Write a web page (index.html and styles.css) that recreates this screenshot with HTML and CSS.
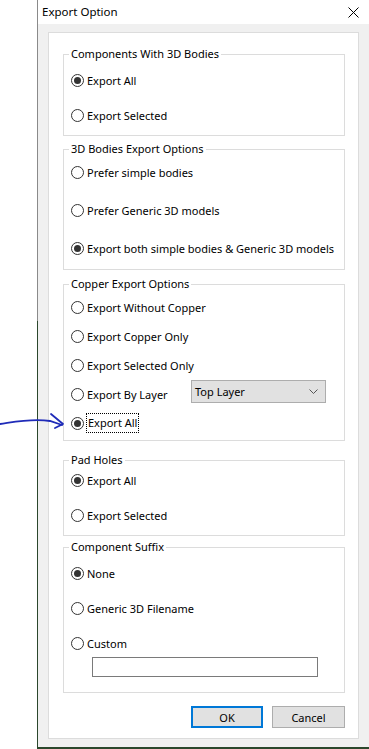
FILE: index.html
```html
<!DOCTYPE html>
<html lang="en">
  <head>
    <meta charset="UTF-8" />
    <meta name="viewport" content="width=device-width, initial-scale=1.0" />
    <title>Export Option</title>
    <link rel="stylesheet" href="styles.css">
  </head>

  <body>
    <div class="dialog">
      <div class="titlebar">
        <span class="title">Export Option</span>
        <svg class="close" width="11" height="11" viewBox="0 0 11 11">
          <path d="M0.5 0.5 L10.5 10.5 M10.5 0.5 L0.5 10.5" stroke="#000" stroke-width="1" fill="none" />
        </svg>
      </div>

      <div class="client">
        <div class="panel">
          <fieldset class="group g1">
            <legend>Components With 3D Bodies</legend>
            <div class="opt"><span class="radio on"></span><span>Export All</span></div>
            <div class="opt"><span class="radio"></span><span>Export Selected</span></div>
          </fieldset>

          <fieldset class="group g2">
            <legend>3D Bodies Export Options</legend>
            <div class="opt"><span class="radio"></span><span>Prefer simple bodies</span></div>
            <div class="opt"><span class="radio"></span><span>Prefer Generic 3D models</span></div>
            <div class="opt"><span class="radio on"></span><span>Export both simple bodies &amp; Generic 3D models</span></div>
          </fieldset>

          <fieldset class="group g3">
            <legend>Copper Export Options</legend>
            <div class="opt"><span class="radio"></span><span>Export Without Copper</span></div>
            <div class="opt"><span class="radio"></span><span>Export Copper Only</span></div>
            <div class="opt"><span class="radio"></span><span>Export Selected Only</span></div>
            <div class="opt">
              <span class="radio"></span><span>Export By Layer</span>
              <div class="combo">
                <span>Top Layer</span>
                <svg width="9" height="5" viewBox="0 0 9 5">
                  <path d="M0.5 0.5 L4.5 4.5 L8.5 0.5" stroke="#555" stroke-width="1" fill="none" />
                </svg>
              </div>
            </div>
            <div class="opt"><span class="radio on"></span><span class="focus">Export All</span></div>
          </fieldset>

          <fieldset class="group g4">
            <legend>Pad Holes</legend>
            <div class="opt"><span class="radio on"></span><span>Export All</span></div>
            <div class="opt"><span class="radio"></span><span>Export Selected</span></div>
          </fieldset>

          <fieldset class="group g5">
            <legend>Component Suffix</legend>
            <div class="opt"><span class="radio on"></span><span>None</span></div>
            <div class="opt"><span class="radio"></span><span>Generic 3D Filename</span></div>
            <div class="custom">
              <div class="opt"><span class="radio"></span><span>Custom</span></div>
              <div class="textbox"></div>
            </div>
          </fieldset>

          <div class="buttons">
            <button class="btn default">OK</button>
            <button class="btn">Cancel</button>
          </div>
        </div>
      </div>
    </div>

    <!-- hand drawn arrow from the screenshot -->
    <svg class="arrow" width="70" height="24" viewBox="0 0 70 24">
      <path d="M0 14 C 14 12, 32 8, 50 11 L 62 15" stroke="#1f2bb8" stroke-width="1.8" fill="none" stroke-linecap="round" />
      <path d="M51 4 L 63 14 L 55 18" stroke="#1f2bb8" stroke-width="1.8" fill="none" stroke-linecap="round" stroke-linejoin="round" />
    </svg>
  </body>
</html>
```

FILE: styles.css
```css
body {
  margin: 0;
  background: #fff;
  font-family: "Noto Sans", "Open Sans", sans-serif;
  font-size: 11px;
  color: #000;
  position: relative;
}

.dialog {
  margin-left: 37px;
  height: 749px;
  box-sizing: border-box;
  display: flex;
  flex-direction: column;
  border-style: solid;
  border-width: 0 0 2px 1px;
  border-image: linear-gradient(#8a8a8a 0 43%, #2b472c 43%) 1;
}

.titlebar {
  height: 24px;
  background: #fff;
  display: flex;
  align-items: center;
  padding: 0 10px 0 4px;
}

.title {
  flex: 1;
  font-size: 11.5px;
  line-height: 16px;
}

.close {
  margin-top: 1px;
}

.client {
  flex: 1;
  min-width: 0;
  background: #f0f0f0;
  padding: 8px 10px 8px 10px;
  display: flex;
}

.panel {
  flex: 1;
  min-width: 0;
  background: #fff;
  border: 1px solid #dcdcdc;
  padding: 13px 13px 0 14px;
  display: flex;
  flex-direction: column;
}

.group {
  margin: 0;
  min-width: 0;
  border: 1px solid #dcdcdc;
  padding: 0 0 10px 7px;
  display: flex;
  flex-direction: column;
}

.group legend {
  padding: 0 2px;
  margin-left: -2px;
  line-height: 16px;
}

.opt {
  display: flex;
  align-items: center;
  gap: 3px;
  height: 20px;
  white-space: nowrap;
}

.radio {
  width: 13px;
  height: 13px;
  box-sizing: border-box;
  border: 1px solid #333;
  border-radius: 50%;
  display: flex;
  align-items: center;
  justify-content: center;
  flex-shrink: 0;
}

.radio.on::after {
  content: "";
  width: 7px;
  height: 7px;
  border-radius: 50%;
  background: #333;
}

.focus {
  outline: 1px dotted #000;
  padding: 0 1px;
  line-height: 18px;
}

.g1 { padding-top: 8px; gap: 15px; padding-bottom: 10px; }
.g2 { margin-top: 5px; padding-top: 5px; gap: 18px; padding-bottom: 11px; }
.g3 { margin-top: 6px; padding-top: 5px; gap: 9px; padding-bottom: 7px; }
.g4 { margin-top: 11px; padding-top: 2px; gap: 15px; padding-bottom: 10px; }
.g5 { margin-top: 3px; padding-top: 8px; gap: 15px; padding-bottom: 15px; }

.combo {
  margin-left: auto;
  margin-right: 18px;
  margin-bottom: 5px;
  width: 135px;
  height: 23px;
  box-sizing: border-box;
  background: #e1e1e1;
  border: 1px solid #adadad;
  display: flex;
  align-items: center;
  justify-content: space-between;
  padding: 0 7px 0 3px;
}

.custom {
  display: flex;
  flex-direction: column;
  gap: 4px;
}

.textbox {
  margin-left: 21px;
  width: 226px;
  height: 20px;
  box-sizing: border-box;
  border: 1px solid #7a7a7a;
  background: #fff;
}

.buttons {
  margin-top: 13px;
  display: flex;
  justify-content: flex-end;
  gap: 9px;
}

.btn {
  width: 73px;
  height: 22px;
  box-sizing: border-box;
  background: #e1e1e1;
  border: 1px solid #adadad;
  font-family: inherit;
  font-size: 11px;
  padding: 0;
  color: #000;
}

.btn.default {
  width: 72px;
  border: 2px solid #0078d7;
}

.arrow {
  position: absolute;
  left: 0;
  top: 410px;
}
```
